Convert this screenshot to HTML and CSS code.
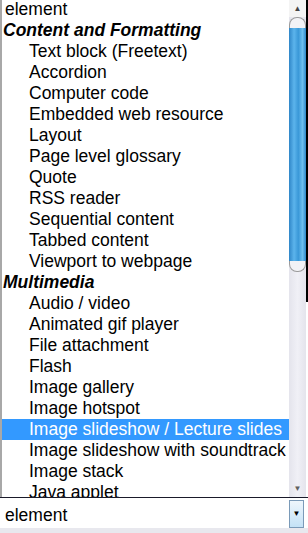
FILE: index.html
```html
<!DOCTYPE html>
<html lang="en">
<head>
    <meta charset="UTF-8">
    <title>Element picker</title>
    <link rel="stylesheet" href="styles.css">
</head>
<body>
    <div id="picker">
        <div id="listbox">
            <div class="leftedge"></div>
            <ul id="options">
                <li class="opt top">element</li>
                <li class="group">Content and Formatting</li>
                <li class="opt">Text block (Freetext)</li>
                <li class="opt">Accordion</li>
                <li class="opt">Computer code</li>
                <li class="opt">Embedded web resource</li>
                <li class="opt">Layout</li>
                <li class="opt">Page level glossary</li>
                <li class="opt">Quote</li>
                <li class="opt">RSS reader</li>
                <li class="opt">Sequential content</li>
                <li class="opt">Tabbed content</li>
                <li class="opt">Viewport to webpage</li>
                <li class="group">Multimedia</li>
                <li class="opt">Audio / video</li>
                <li class="opt">Animated gif player</li>
                <li class="opt">File attachment</li>
                <li class="opt">Flash</li>
                <li class="opt">Image gallery</li>
                <li class="opt">Image hotspot</li>
                <li class="opt selected">Image slideshow / Lecture slides</li>
                <li class="opt">Image slideshow with soundtrack</li>
                <li class="opt">Image stack</li>
                <li class="opt">Java applet</li>
            </ul>
            <div id="scrollbar">
                <div class="arrow">&#9650;</div>
                <div class="thumb">
                    <div class="cap capTop"></div>
                    <div class="thumbBody"></div>
                    <div class="cap capBottom"></div>
                </div>
                <div class="track"></div>
                <div class="arrow">&#9660;</div>
            </div>
            <div class="rightedge"><div class="blackline"></div></div>
        </div>
        <div id="selectbox">
            <div class="value">element</div>
            <div class="dropbtn">&#9660;</div>
        </div>
        <div class="bottomstrip"></div>
    </div>
</body>
</html>
```

FILE: styles.css
```css
body {
    margin: 0;
    padding: 0;
    background-color: #fff;
    font-family: "Liberation Sans", Arial, sans-serif;
}

#picker {
    width: 308px;
    height: 533px;
    display: flex;
    flex-direction: column;
    overflow: hidden;
}

#listbox {
    height: 497px;
    display: flex;
    flex-shrink: 0;
}

.leftedge {
    width: 2px;
    background-color: #a8a8a8;
}

#options {
    flex: 1;
    margin: 0;
    padding: 0;
    list-style: none;
    overflow: hidden;
    font-size: 17.5px;
    color: #000;
}

#options li {
    height: 21px;
    line-height: 21px;
    white-space: nowrap;
}

.group {
    padding-left: 1px;
    font-weight: bold;
    font-style: italic;
}

.opt {
    padding-left: 27px;
}

.opt.top {
    margin-top: -1px;
    padding-left: 3px;
}

.selected {
    background-color: #3399ff;
    color: #fff;
}

#scrollbar {
    width: 17px;
    display: flex;
    flex-direction: column;
    background: linear-gradient(to right, #e4e4ec, #f0f0f6 50%, #e4e4ec);
}

.arrow {
    height: 17px;
    font-size: 8px;
    line-height: 17px;
    text-align: center;
    color: #444;
    background-color: #f4f4f4;
}

.arrow:last-child {
    color: #606060;
    background: transparent;
}

.thumb {
    height: 255px;
    display: flex;
    flex-direction: column;
}

.cap {
    height: 10px;
    background-color: #f2f2f6;
    border: 1px solid #9a9a9a;
}

.capTop {
    border-bottom: none;
    border-radius: 8px 8px 0 0;
}

.capBottom {
    border-top: none;
    border-radius: 0 0 8px 8px;
}

.thumbBody {
    flex: 1;
    background: linear-gradient(to right, #2f86c8, #5cb4ec 30%, #3a98d8 55%, #6ebfef 80%, #2f86c8);
}

.track {
    flex: 1;
}

.rightedge {
    width: 2px;
}

.blackline {
    height: 302px;
    background-color: #000;
}

#selectbox {
    height: 30px;
    flex-shrink: 0;
    display: flex;
    border-top: 1px solid #1a1a2a;
    font-size: 17.5px;
}

.value {
    flex: 1;
    padding-left: 5px;
    line-height: 34px;
}

.dropbtn {
    width: 13px;
    margin: 2px 4px 0 0;
    border: 1px solid #7a9ab8;
    background: linear-gradient(to bottom, #eef6fc, #c4e2f6);
    font-size: 8px;
    line-height: 26px;
    text-align: center;
    color: #000;
}

.bottomstrip {
    flex: 1;
    background-color: #e8e8ee;
}
```
